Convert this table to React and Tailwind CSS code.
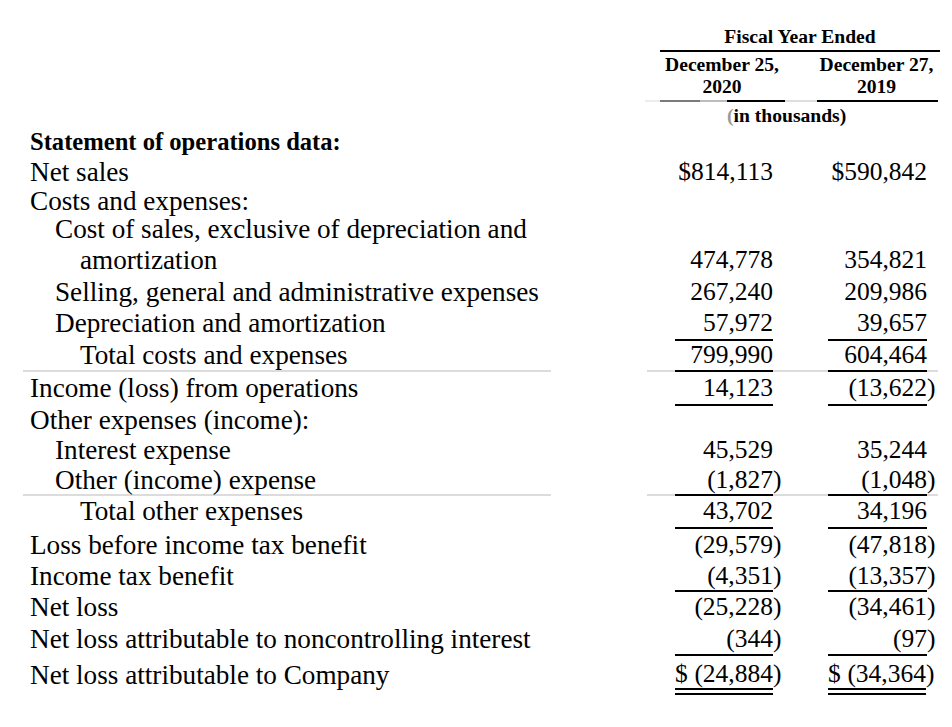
import React from "react";

const rows = [
  { label: "Statement of operations data:", bold: true, indent: 0, h: "h-[30px]" },
  { label: "Net sales", a: "$814,113", b: "$590,842", indent: 0, h: "h-[30px]" },
  { label: "Costs and expenses:", indent: 0, h: "h-[28px]" },
  { label: "Cost of sales, exclusive of depreciation and", indent: 1, h: "h-[28px]" },
  { label: "amortization", indent: 2, a: "474,778", b: "354,821", h: "h-[34px]" },
  { label: "Selling, general and administrative expenses", indent: 1, a: "267,240", b: "209,986", h: "h-[30px]" },
  { label: "Depreciation and amortization", indent: 1, a: "57,972", b: "39,657", h: "h-[33px]", ul: true },
  { label: "Total costs and expenses", indent: 2, a: "799,990", b: "604,464", h: "h-[31px]", ul: true, gray: true },
  { label: "Income (loss) from operations", indent: 0, a: "14,123", b: "(13,622)", h: "h-[34px]", ul: true },
  { label: "Other expenses (income):", indent: 0, h: "h-[30px]" },
  { label: "Interest expense", indent: 1, a: "45,529", b: "35,244", h: "h-[30px]" },
  { label: "Other (income) expense", indent: 1, a: "(1,827)", b: "(1,048)", h: "h-[30px]", ul: true, gray: true },
  { label: "Total other expenses", indent: 2, a: "43,702", b: "34,196", h: "h-[33px]", ul: true },
  { label: "Loss before income tax benefit", indent: 0, a: "(29,579)", b: "(47,818)", h: "h-[34px]" },
  { label: "Income tax benefit", indent: 0, a: "(4,351)", b: "(13,357)", h: "h-[29px]", ul: true },
  { label: "Net loss", indent: 0, a: "(25,228)", b: "(34,461)", h: "h-[32px]" },
  { label: "Net loss attributable to noncontrolling interest", indent: 0, a: "(344)", b: "(97)", h: "h-[32px]", ul: true },
];

const indentCls = ["pl-[7px]", "pl-[32px]", "pl-[57px]"];

function NumText({ v }) {
  if (!v) return null;
  if (v.endsWith(")")) {
    return (
      <span className="whitespace-nowrap">
        {v.slice(0, -1)}
        <span className="mr-[-8.5px]">)</span>
      </span>
    );
  }
  return <span className="whitespace-nowrap">{v}</span>;
}

function Row({ r }) {
  const seg = r.gray ? "border-[#dcdcdc]" : "border-transparent";
  const num = r.ul ? "border-black" : seg;
  return (
    <div className={`ml-[23px] flex w-[915px] ${r.h}`}>
      <div
        className={`w-[528px] flex items-center border-b-2 ${seg} ${indentCls[r.indent]} whitespace-nowrap ${
          r.bold ? "font-bold text-[24.6px]" : "text-[27.2px]"
        }`}
      >
        {r.label}
      </div>
      <div className="w-[96px] border-b-2 border-transparent" />
      <div className={`w-[28px] border-b-2 ${seg}`} />
      <div className={`w-[98px] flex items-center justify-end border-b-2 ${num} text-[25.5px]`}>
        <NumText v={r.a} />
      </div>
      <div className={`w-[55px] border-b-2 ${seg}`} />
      <div className={`w-[99px] flex items-center justify-end border-b-2 ${num} text-[25.5px]`}>
        <NumText v={r.b} />
      </div>
      <div className={`w-[11px] border-b-2 ${seg}`} />
    </div>
  );
}

function TotalCell({ v }) {
  return (
    <div className="w-[98px] pt-[4px]">
      <div className="h-[30px] flex items-center justify-between border-b-2 border-black text-[25.5px] leading-[28px]">
        <span>$</span>
        <NumText v={v} />
      </div>
      <div className="mt-[3px] h-[2px] bg-black" />
    </div>
  );
}

export default function App() {
  return (
    <div className="w-[952px] h-[727px] bg-white text-black font-['Liberation_Serif','Times_New_Roman',serif] overflow-hidden">
      {/* Header */}
      <div className="h-[128px] pl-[645px]">
        <div className="ml-[15px] w-[280px] pt-[24px] font-bold text-[19.6px]">
          <div className="h-[28px] flex items-center justify-center border-b-2 border-black">
            Fiscal Year Ended
          </div>
          <div className="flex py-[2px] leading-[22px]">
            <div className="w-[124px] text-center">
              December 25,
              <br />
              2020
            </div>
            <div className="w-[31px]" />
            <div className="w-[123px] text-center">
              December 27,
              <br />
              2019
            </div>
          </div>
        </div>
        <div className="flex h-[2px]">
          <div className="w-[15px] bg-[#ececec]" />
          <div className="w-[40px] bg-[#7a7a7a]" />
          <div className="w-[27px] bg-[#bdbdbd]" />
          <div className="w-[58px] bg-black" />
          <div className="w-[32px] bg-[#dedede]" />
          <div className="w-[121px] bg-black" />
        </div>
        <div className="ml-[82px] mt-[2px] h-[24px] leading-[24px] font-bold text-[19.6px] whitespace-nowrap">
          <span className="text-[#9a9a9a]">(</span>in thousands)
        </div>
      </div>

      {/* Body */}
      {rows.map((r, i) => (
        <Row key={i} r={r} />
      ))}
      <div className="ml-[23px] flex w-[915px]">
        <div className="w-[528px] pl-[7px] pt-[4px] h-[34px] flex items-center text-[27.2px] whitespace-nowrap">
          Net loss attributable to Company
        </div>
        <div className="w-[96px]" />
        <div className="w-[28px]" />
        <TotalCell v="(24,884)" />
        <div className="w-[55px]" />
        <div className="w-[99px]">
          <TotalCell v="(34,364)" />
        </div>
        <div className="w-[11px]" />
      </div>
    </div>
  );
}
